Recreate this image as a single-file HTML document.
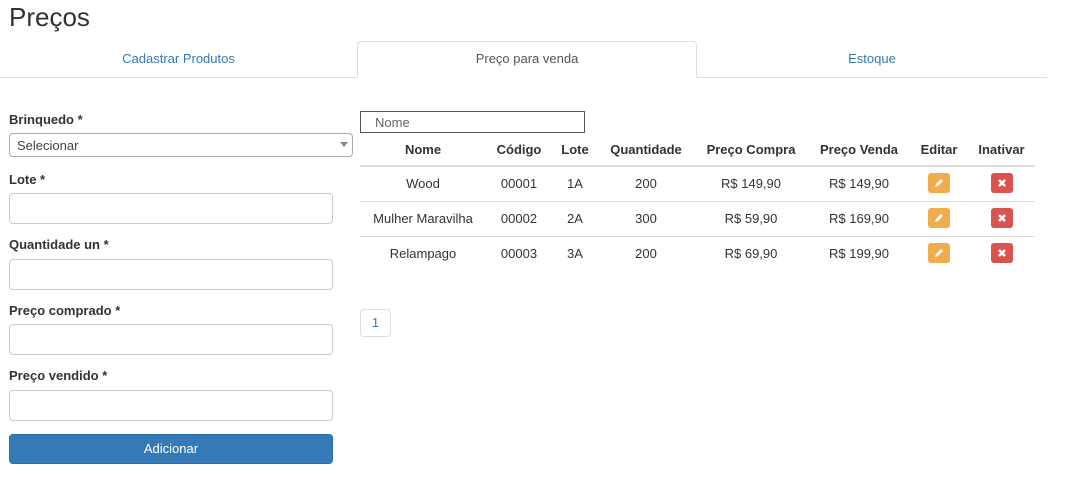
<!DOCTYPE html><html><head><meta charset="utf-8"><style>
*{box-sizing:border-box}body{margin:0;width:1070px;height:489px;overflow:hidden;background:#fff;font-family:"Liberation Sans",sans-serif;font-size:13px;color:#333;position:relative}
.a{position:absolute}
h1{position:absolute;left:9px;top:2px;margin:0;font-size:26px;font-weight:normal;color:#333}
.tab{position:absolute;top:41px;height:37px;line-height:36px;text-align:center;color:#337ab7}
.lbl{position:absolute;left:9px;font-weight:bold}
.inp{position:absolute;left:9px;width:324px;height:31px;border:1px solid #ccc;border-radius:4px}
table{position:absolute;left:360px;top:133px;width:675px;border-collapse:collapse}
th,td{text-align:center;padding:0;font-size:13px}
th{height:33px;border-bottom:2px solid #ddd}
td{height:35px;border-bottom:1px solid #ddd}
tr.l td{border-bottom:0}
.b{display:inline-block;width:22px;height:20px;border-radius:3px;vertical-align:middle;position:relative;top:-1px}
</style></head><body>
<h1>Preços</h1>
<div class="a" style="left:0;top:77px;width:1047px;border-top:1px solid #ddd"></div>
<div class="tab" style="left:0;width:357px">Cadastrar Produtos</div>
<div class="tab" style="left:357px;width:340px;border:1px solid #ddd;border-bottom:1px solid #fff;border-radius:4px 4px 0 0;background:#fff;color:#555;line-height:34px">Preço para venda</div>
<div class="tab" style="left:697px;width:350px">Estoque</div>

<div class="lbl" style="top:112px">Brinquedo *</div>
<div class="a" style="left:9px;top:133px;width:344px;height:24px;border:1px solid #aaa;border-radius:4px;padding:4px 7px;color:#444">Selecionar<span class="a" style="right:4px;top:8px;border:4px solid transparent;border-top:5px solid #888;border-bottom:0"></span></div>
<div class="lbl" style="top:172px">Lote *</div><div class="inp" style="top:193px"></div>
<div class="lbl" style="top:237px">Quantidade un *</div><div class="inp" style="top:259px"></div>
<div class="lbl" style="top:303px">Preço comprado *</div><div class="inp" style="top:324px"></div>
<div class="lbl" style="top:368px">Preço vendido *</div><div class="inp" style="top:390px"></div>
<div class="a" style="left:9px;top:434px;width:324px;height:30px;background:#337ab7;border:1px solid #2e6da4;border-radius:4px;color:#fff;text-align:center;line-height:28px">Adicionar</div>

<div class="a" style="left:360px;top:111px;width:225px;height:22px;border:1px solid #555;padding:3px 14px;color:#666">Nome</div>
<table>
<tr><th style="width:126px">Nome</th><th style="width:66px">Código</th><th style="width:46px">Lote</th><th style="width:96px">Quantidade</th><th style="width:114px">Preço Compra</th><th style="width:102px">Preço Venda</th><th style="width:58px">Editar</th><th>Inativar</th></tr>
<tr><td>Wood</td><td>00001</td><td>1A</td><td>200</td><td>R$ 149,90</td><td>R$ 149,90</td><td><span class="b" style="background:#f0ad4e"><svg width="22" height="20"><path d="M7 14l1-3 5-5 2 2-5 5z" fill="#fff"/></svg></span></td><td><span class="b" style="background:#d9534f"><svg width="22" height="20"><path d="M8 7l6 6M14 7l-6 6" stroke="#fff" stroke-width="2.5"/></svg></span></td></tr>
<tr><td>Mulher Maravilha</td><td>00002</td><td>2A</td><td>300</td><td>R$ 59,90</td><td>R$ 169,90</td><td><span class="b" style="background:#f0ad4e"><svg width="22" height="20"><path d="M7 14l1-3 5-5 2 2-5 5z" fill="#fff"/></svg></span></td><td><span class="b" style="background:#d9534f"><svg width="22" height="20"><path d="M8 7l6 6M14 7l-6 6" stroke="#fff" stroke-width="2.5"/></svg></span></td></tr>
<tr class="l"><td>Relampago</td><td>00003</td><td>3A</td><td>200</td><td>R$ 69,90</td><td>R$ 199,90</td><td><span class="b" style="background:#f0ad4e"><svg width="22" height="20"><path d="M7 14l1-3 5-5 2 2-5 5z" fill="#fff"/></svg></span></td><td><span class="b" style="background:#d9534f"><svg width="22" height="20"><path d="M8 7l6 6M14 7l-6 6" stroke="#fff" stroke-width="2.5"/></svg></span></td></tr>
</table>
<div class="a" style="left:360px;top:309px;width:31px;height:28px;border:1px solid #ddd;border-radius:4px;color:#337ab7;text-align:center;line-height:26px">1</div>
</body></html>
